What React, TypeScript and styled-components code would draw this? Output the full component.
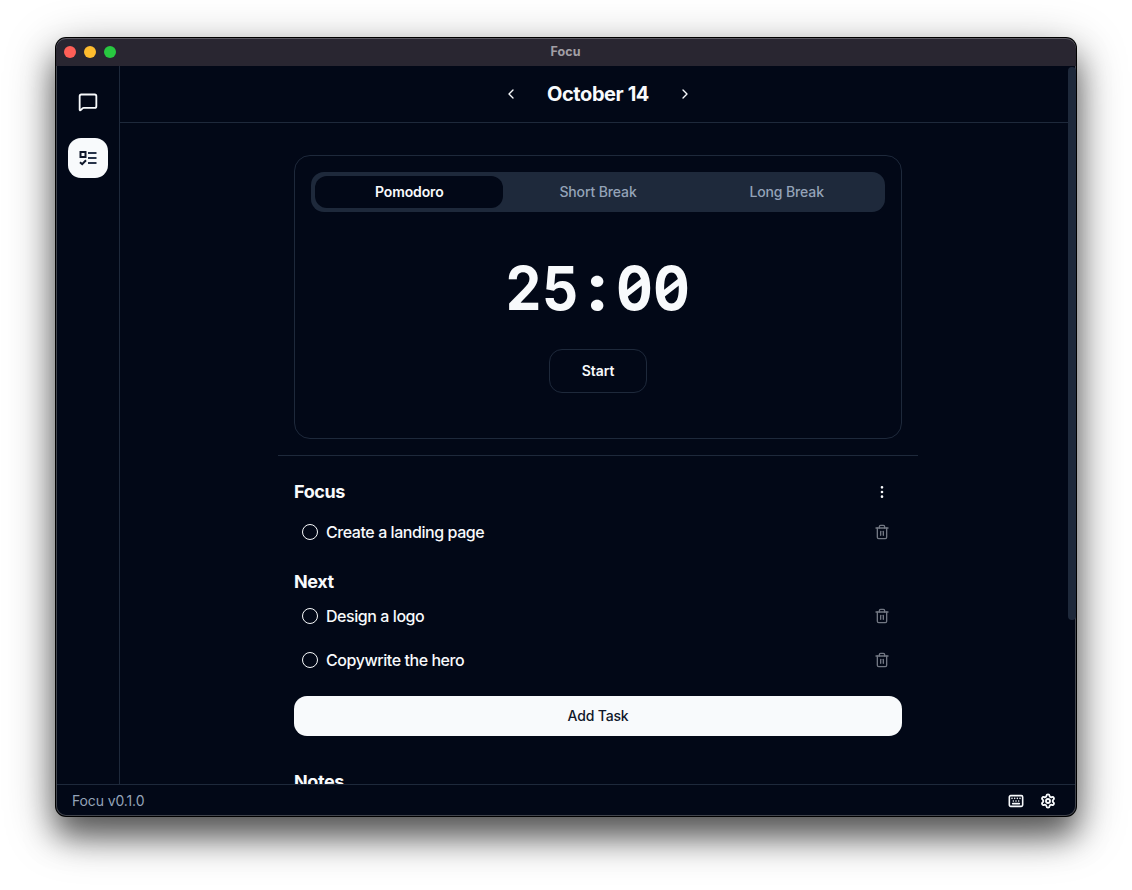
import React from "react";
import styled, { createGlobalStyle } from "styled-components";
import { MessageSquare, ChevronLeft, ChevronRight, EllipsisVertical, Trash2, Keyboard, Settings } from "lucide-react";

const Global = createGlobalStyle`
  * { box-sizing: border-box; }
  body { margin: 0; background: #fff; font-family: Inter, sans-serif; color: #f8fafc; overflow: hidden; }
  button { font-family: inherit; color: inherit; border: 0; padding: 0; background: none; }
`;
const Desktop = styled.div`
  height: 890px;
  padding: 38px 56px 74px;
  overflow: hidden;
`;
const Window = styled.main`
  height: 778px;
  border-radius: 10px;
  background: #020817;
  box-shadow: inset 0 0 0 1px #41444c, 0 0 0 1px #000, 0 20px 30px rgba(0,0,0,.5), 0 14px 50px rgba(0,0,0,.4);
  display: flex;
  flex-direction: column;
  overflow: hidden;
  padding: 0 1px 1px;
`;
const TitleBar = styled.header`
  height: 28px;
  flex: none;
  margin: 0 -1px;
  background: #292631;
  box-shadow: inset 0 1px 0 #5c5a62;
  border-radius: 10px 10px 0 0;
  display: grid;
  grid-template-columns: 1fr auto 1fr;
  align-items: center;
  color: #a19fa5;
  font-size: 12.5px;
  font-weight: 700;
  padding: 0 8px;
`;
const WindowTitle = styled.span`padding: 0 1px 1px 0; letter-spacing: .1px;`;
const Lights = styled.div`display: flex; gap: 8px;`;
const Light = styled.span<{ $color: string }>`
  width: 12px; height: 12px; border-radius: 50%; background: ${p => p.$color};
`;
const Body = styled.div`flex: 1; min-height: 0; display: flex;`;
const Sidebar = styled.nav`
  width: 63px;
  border-right: 1px solid #1e293b;
  padding: 16px 11px;
  display: flex;
  flex-direction: column;
  gap: 16px;
`;
const NavButton = styled.button<{ $active?: boolean }>`
  width: 40px; height: 40px; border-radius: ${p => (p.$active ? "13px" : "12px")};
  display: grid; place-items: center;
  padding-bottom: ${p => (p.$active ? 0 : 1)}px;
  background: ${p => (p.$active ? "#f8fafc" : "transparent")};
  color: ${p => (p.$active ? "#0f172a" : "#f8fafc")};
`;
const Content = styled.section`flex: 1; min-width: 0; overflow: hidden; display: flex; flex-direction: column;`;
const DateBar = styled.div`
  height: 57px; flex: none;
  border-bottom: 1px solid #1e293b;
  display: flex; align-items: center; justify-content: center; gap: 27px;
  padding-left: 1px;
  svg { display: block; }
`;
const DateTitle = styled.h1`
  margin: 0; width: 104px; display: flex; justify-content: center; white-space: nowrap;
  font-size: 20px; font-weight: 700; letter-spacing: -.42px; line-height: 28px;
`;
const Column = styled.div`width: 640px; margin: 32px auto 0;`;
const TimerWrap = styled.div`padding: 0 16px 16px; border-bottom: 1px solid #1e293b;`;
const Card = styled.div`
  height: 284px; border: 1px solid #1e293b; border-radius: 16px; padding: 16px;
  display: flex; flex-direction: column; align-items: center;
`;
const Tabs = styled.div`
  align-self: stretch; height: 40px; padding: 4px; border-radius: 13px; background: #1e293b;
  display: grid; grid-template-columns: repeat(3, 1fr);
`;
const Tab = styled.button<{ $active?: boolean }>`
  border-radius: 12px; font-size: 14px; font-weight: ${p => (p.$active ? 600 : 500)};
  letter-spacing: -.12px; padding: 0 0 2px 1px;
  background: ${p => (p.$active ? "#020817" : "transparent")};
  color: ${p => (p.$active ? "#f8fafc" : "#94a3b8")};
`;
const Clock = styled.div`
  margin-top: 46px; height: 60px; line-height: 60px; font-size: 60px; font-weight: 650;
  font-feature-settings: "tnum";
  display: grid; grid-template-columns: repeat(5, 36.9px); justify-items: center;
`;
const Digit = styled.span`transform: scaleX(.94);`;
const Colon = styled.span`transform: translateY(-3px) scale(1.22, 1.12);`;
const Zero = styled(Digit)`
  position: relative;
  &::after {
    content: "";
    position: absolute;
    left: calc(50% - 12px);
    top: 27px;
    width: 24px;
    height: 6px;
    background: #f8fafc;
    transform: rotate(-36deg);
  }
`;
const StartButton = styled.button`
  margin-top: 31px; width: 98px; height: 44px; border: 1px solid #1e293b; border-radius: 13px;
  font-size: 14px; font-weight: 600; letter-spacing: -.05px; padding: 0 0 2px 1px;
`;
const Lists = styled.div`padding: 20px 16px 0;`;
const Heading = styled.div<{ $height: number; $top?: number }>`
  height: ${p => p.$height}px; display: flex; align-items: center; justify-content: space-between;
  padding: ${p => p.$top ?? 0}px 12px 0 .5px; font-size: 18px; font-weight: 700; letter-spacing: -.42px;
`;
const HeadingText = styled.span`padding-bottom: 2px;`;
const FocusHeading = styled(Heading)`padding: 0 12px 2px .5px;`;
const Task = styled.div`
  height: 44px; display: flex; align-items: center; padding: 0 12px 0 8px;
  font-size: 16px; font-weight: 500; letter-spacing: -.44px;
  svg { margin-left: auto; color: #727783; }
`;
const Radio = styled.span`width: 16px; height: 16px; border: 1px solid #f8fafc; border-radius: 50%; margin-right: 8.5px;`;
const AddButton = styled.button`
  display: block; width: 100%; height: 40px; margin: 14px 0 32px; border-radius: 13px;
  background: #f8fafc; color: #0f172a; font-size: 14px; font-weight: 500; letter-spacing: -.18px;
  padding: 0 0 2px 1px;
`;
const ScrollTrack = styled.div`width: 7px; margin-left: -7px; padding-top: 1px;`;
const ScrollThumb = styled.div`width: 8px; height: 553px; border-radius: 4px; background: #1e293b;`;
const StatusBar = styled.footer`
  height: 31px; flex: none; border-top: 1px solid #1e293b; padding: 1px 19px 0 15px;
  display: flex; align-items: center; justify-content: space-between;
  color: #94a3b8; font-size: 14px; letter-spacing: -.12px;
`;
const StatusIcons = styled.div`display: flex; gap: 16px; color: #f8fafc; svg { display: block; }`;

const TasksIcon = () => (
  <svg width="20" height="20" viewBox="0 0 20 20" fill="none" stroke="currentColor" strokeWidth="2">
    <rect x="2.5" y="4" width="5" height="5" />
    <path d="M2 14.2 4.2 16.2 8 12.2" />
    <path d="M10 5h8.5M10 10h8.5M10 15h8.5" stroke="#28344a" />
  </svg>
);

const TaskRow = ({ children }: { children: React.ReactNode }) => (
  <Task><Radio />{children}<Trash2 size={16} strokeWidth={2} /></Task>
);

export default function App() {
  return (
    <Desktop>
      <Global />
      <Window>
        <TitleBar>
          <Lights><Light $color="#ff5f57" /><Light $color="#febc2e" /><Light $color="#28c840" /></Lights>
          <WindowTitle>Focu</WindowTitle>
          <span />
        </TitleBar>
        <Body>
          <Sidebar>
            <NavButton><MessageSquare size={20} strokeWidth={2.2} /></NavButton>
            <NavButton $active><TasksIcon /></NavButton>
          </Sidebar>
          <Content>
            <DateBar>
              <ChevronLeft size={16} />
              <DateTitle>October 14</DateTitle>
              <ChevronRight size={16} />
            </DateBar>
            <Column>
              <TimerWrap>
                <Card>
                  <Tabs><Tab $active>Pomodoro</Tab><Tab>Short Break</Tab><Tab>Long Break</Tab></Tabs>
                  <Clock><Digit>2</Digit><Digit>5</Digit><Colon>:</Colon><Zero>0</Zero><Zero>0</Zero></Clock>
                  <StartButton>Start</StartButton>
                </Card>
              </TimerWrap>
              <Lists>
                <FocusHeading $height={34}><HeadingText>Focus</HeadingText><EllipsisVertical size={16} /></FocusHeading>
                <TaskRow>Create a landing page</TaskRow>
                <Heading $height={40} $top={14}>Next</Heading>
                <TaskRow>Design a logo</TaskRow>
                <TaskRow>Copywrite the hero</TaskRow>
                <AddButton>Add Task</AddButton>
                <Heading $height={28}><HeadingText>Notes</HeadingText></Heading>
              </Lists>
            </Column>
          </Content>
          <ScrollTrack><ScrollThumb /></ScrollTrack>
        </Body>
        <StatusBar>
          <span>Focu v0.1.0</span>
          <StatusIcons><Keyboard size={16} strokeWidth={2.4} /><Settings size={16} strokeWidth={2.8} /></StatusIcons>
        </StatusBar>
      </Window>
    </Desktop>
  );
}
